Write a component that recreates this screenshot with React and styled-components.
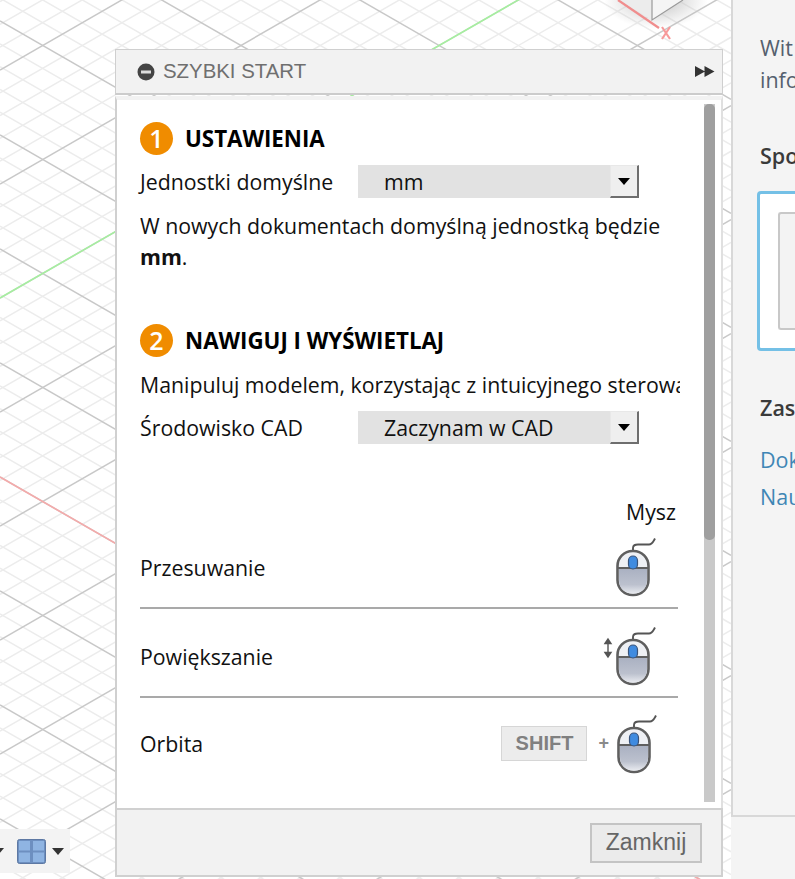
import React from "react";
import styled, { createGlobalStyle } from "styled-components";

const GlobalStyle = createGlobalStyle`
  html, body {
    margin: 0;
    padding: 0;
    height: 100%;
    overflow: hidden;
  }
  body {
    font-family: "Open Sans", "Liberation Sans", sans-serif;
  }
`;

const Page = styled.div`
  display: flex;
  width: 795px;
  height: 879px;
  overflow: hidden;
`;

const Canvas = styled.div`
  position: relative;
  width: 731px;
  height: 879px;
  background: #ffffff;
  overflow: hidden;
`;

const GridSvg = styled.svg`
  position: absolute;
  left: 0;
  top: 0;
`;

const ViewToolbar = styled.div`
  position: absolute;
  left: 0;
  top: 829px;
  width: 70px;
  height: 44px;
  display: flex;
  align-items: center;
  gap: 13px;
  background: #f3f3f3;
`;

const Caret = styled.span`
  border-left: 6px solid transparent;
  border-right: 6px solid transparent;
  border-top: 7px solid #333;
  margin-left: ${(p) => p.$left || 0}px;
`;

const Dialog = styled.div`
  position: absolute;
  left: 115px;
  top: 49px;
  width: 608px;
  height: 828px;
  display: flex;
  flex-direction: column;
`;

const DialogHeader = styled.div`
  height: 46px;
  flex: none;
  display: flex;
  align-items: center;
  box-sizing: border-box;
  padding: 0 7px 0 21px;
  margin-bottom: 1px;
  background: #f2f2f2;
  border: 1px solid #cfcfcf;
  border-bottom: 2px solid #cccccc;
  color: #6f6f6f;
  font-family: "Liberation Sans", Arial, sans-serif;
  font-size: 20.4px;
`;

const HeaderTitle = styled.span`
  margin-left: 8px;
  flex: 1;
`;

const DialogBody = styled.div`
  flex: 1;
  min-height: 0;
  position: relative;
  background: #ffffff;
  border-left: 2px solid #d0d0d0;
  border-right: 2px solid #e0e0e0;
  border-top: 4px solid #f2f2f2;
  overflow: hidden;
`;

const Content = styled.div`
  width: 540px;
  padding: 21px 0 0 23px;
  color: #111;
  font-size: 21.3px;
`;

const Section = styled.section`
  margin-bottom: ${(p) => p.$gap || 0}px;
`;

const Heading = styled.div`
  display: flex;
  align-items: center;
  gap: 12px;
  height: 34px;
  font-weight: 700;
  font-size: 22.3px;
  color: #000;
`;

const Badge = styled.span`
  width: 33px;
  height: 33px;
  border-radius: 50%;
  background: #f08c00;
  color: #fff;
  display: flex;
  align-items: center;
  justify-content: center;
  font-size: 25px;
  font-weight: 600;
`;

const FieldRow = styled.div`
  display: flex;
  align-items: center;
  height: 33px;
  margin-top: ${(p) => p.$top || 0}px;
  white-space: nowrap;
`;

const FieldLabel = styled.span`
  width: 218px;
  flex: none;
`;

const Select = styled.div`
  width: 281px;
  height: 33px;
  display: flex;
  align-items: center;
  justify-content: space-between;
  background: #e2e2e2;
  padding-left: 26px;
  box-sizing: border-box;
`;

const SelectArrow = styled.span`
  width: 29px;
  height: 33px;
  box-sizing: border-box;
  background: #efefef;
  border: 1px solid #e8e8e8;
  border-right: 2px solid #6e6e6e;
  border-bottom: 2px solid #6e6e6e;
  display: flex;
  align-items: center;
  justify-content: center;

  &::after {
    content: "";
    border-left: 6px solid transparent;
    border-right: 6px solid transparent;
    border-top: 7px solid #000;
  }
`;

const Paragraph = styled.p`
  margin: 12px 0 0;
  line-height: 31px;
  white-space: ${(p) => (p.$clip ? "nowrap" : "normal")};
  overflow: hidden;
`;

const MouseTable = styled.div`
  margin-top: 53px;
  width: 538px;
`;

const MouseHeader = styled.div`
  height: 23px;
  text-align: right;
  padding-right: 2px;
  line-height: 30px;
`;

const MouseRow = styled.div`
  display: flex;
  align-items: center;
  justify-content: space-between;
  height: 89px;
  box-sizing: border-box;
  padding: ${(p) => (p.$last ? "2px 19px 0 0" : "7px 20px 0 0")};
  border-bottom: ${(p) => (p.$last ? "none" : "2px solid #a9a9a9")};
`;

const Controls = styled.div`
  display: flex;
  align-items: center;
`;

const ArrowSlot = styled.span`
  display: flex;
  margin: 0 2px 16px 0;
`;

const ShiftKey = styled.span`
  display: inline-flex;
  align-items: center;
  justify-content: center;
  width: 86px;
  height: 35px;
  box-sizing: border-box;
  background: #ececec;
  border: 1px solid #d6d6d6;
  color: #808080;
  font-family: "Liberation Sans", Arial, sans-serif;
  font-weight: 700;
  font-size: 20px;
`;

const Plus = styled.span`
  margin: 0 8px 0 11px;
  color: #8a8a8a;
  font-family: "Liberation Sans", Arial, sans-serif;
  font-weight: 700;
  font-size: 18px;
`;

const ScrollTrack = styled.div`
  position: absolute;
  top: 4px;
  right: 6px;
  width: 11px;
  height: 698px;
  background: #c9c9c9;
`;

const ScrollThumb = styled.div`
  height: 436px;
  background: #9f9f9f;
  border-radius: 5px;
`;

const DialogFooter = styled.div`
  height: 69px;
  flex: none;
  display: flex;
  align-items: center;
  justify-content: flex-end;
  padding-right: 19px;
  background: #f2f2f2;
  border: 2px solid #d0d0d0;
  box-sizing: border-box;
`;

const CloseButton = styled.button`
  width: 112px;
  height: 40px;
  background: #ebebeb;
  border: 2px solid #c4c4c4;
  color: #666;
  font-family: "Liberation Sans", Arial, sans-serif;
  font-size: 23px;
  padding: 0;
`;

const SideWrap = styled.div`
  flex: 1;
  background: #f4f4f4;
  min-width: 0;
`;

const Side = styled.aside`
  height: 817px;
  box-sizing: border-box;
  background: #f4f4f4;
  border-left: 2px solid #d8d8d8;
  border-bottom: 2px solid #d8d8d8;
  padding: 32px 0 0 27px;
  overflow: hidden;
  white-space: nowrap;
  font-size: 21.5px;
  color: #55606e;
  line-height: 32px;
`;

const SideHeading = styled.div`
  font-weight: 600;
  color: #3a3a3a;
  margin-top: ${(p) => p.$top}px;
`;

const CardOutline = styled.div`
  width: 80px;
  height: 160px;
  box-sizing: border-box;
  margin-top: 19px;
  margin-left: -3px;
  padding: 18px 0 0 18px;
  border: 3px solid #74c0e6;
  border-right: none;
  border-radius: 4px 0 0 4px;
  background: #fff;
`;

const CardInner = styled.div`
  height: 118px;
  box-sizing: border-box;
  border: 2px solid #c8c8c8;
  border-right: none;
  border-radius: 3px 0 0 3px;
  background: #f3f3f3;
`;

const SideLinks = styled.div`
  margin-top: 17px;
  color: #3f86b5;
  line-height: 37px;
`;

const slope = 0.575;
const W = 731;
const H = 879;
const SUB = 114 / 5;

function gridLines() {
  const out = [];
  for (let k = -45; k <= 70; k++) {
    const major = k % 5 === 0;
    const stroke = major ? "#c8c8c8" : "#ececec";
    const up = 298 + k * SUB;
    const down = 477 - k * SUB;
    out.push({ key: "u" + k, y1: up, y2: up - W * slope, stroke, major });
    out.push({ key: "d" + k, y1: down, y2: down + W * slope, stroke, major });
  }
  return out.sort((a, b) => a.major - b.major);
}

function Grid() {
  return (
    <GridSvg width={W} height={H}>
      <defs>
        <radialGradient id="cubeShadow" cx="50%" cy="40%" r="50%">
          <stop offset="0%" stopColor="#b5b5b5" stopOpacity="0.85" />
          <stop offset="100%" stopColor="#bdbdbd" stopOpacity="0" />
        </radialGradient>
      </defs>
      {gridLines().map((l) => (
        <line key={l.key} x1="0" y1={l.y1} x2={W} y2={l.y2} stroke={l.stroke} strokeWidth="1.5" />
      ))}
      <line x1="0" y1="298" x2={W} y2={298 - W * slope} stroke="#a6eea0" strokeWidth="1.6" />
      <line x1="0" y1="477" x2={W} y2={477 + W * slope} stroke="#f4aaaa" strokeWidth="1.6" />
      <ellipse cx="656" cy="6" rx="52" ry="28" fill="url(#cubeShadow)" />
      <path d="M618 0L652 20V0Z" fill="#ececec" />
      <path d="M652 0V20L683 0Z" fill="#f5f5f5" />
      <path d="M652 0V20L683 0" fill="none" stroke="#9a9a9a" strokeWidth="1.2" />
      <line x1="618" y1="0" x2="659" y2="28" stroke="#f08d8d" strokeWidth="2.2" />
      <path d="M662 27L670 39M670 27L662 39" stroke="#f79a9a" strokeWidth="2.2" fill="none" />
    </GridSvg>
  );
}

function MouseIcon() {
  return (
    <svg width="42" height="60" viewBox="0 0 42 60">
      <defs>
        <linearGradient id="mouseBody" x1="0" y1="0" x2="0" y2="1">
          <stop offset="0%" stopColor="#a9b0c1" />
          <stop offset="65%" stopColor="#bcc1ce" />
          <stop offset="100%" stopColor="#e8eaef" />
        </linearGradient>
      </defs>
      <path d="M17 19V11C17 8 19 7.500 22 7.500H33C36 7.500 37 5 39 1.500" fill="none" stroke="#555" strokeWidth="1.9" />
      <rect x="1.500" y="14" width="31" height="44" rx="15" fill="#eef0f4" stroke="#5f5f5f" strokeWidth="2.6" />
      <path d="M3 31H31V43C31 52 25 56.500 17 56.500C9 56.500 3 52 3 43Z" fill="url(#mouseBody)" />
      <line x1="2" y1="31" x2="32" y2="31" stroke="#5f5f5f" strokeWidth="2" />
      <rect x="12.500" y="19" width="9" height="13" rx="4.500" fill="#3f8be0" stroke="#39537a" strokeWidth="1.2" />
    </svg>
  );
}

function ZoomArrow() {
  return (
    <svg width="12" height="22" viewBox="0 0 12 22">
      <path d="M6 3V19M3 6.500L6 2L9 6.500ZM3 15.500L6 20L9 15.500Z" fill="#555" stroke="#555" strokeWidth="1.4" />
    </svg>
  );
}

function CollapseIcon() {
  return (
    <svg width="18" height="18" viewBox="0 0 18 18">
      <circle cx="9" cy="9" r="8.500" fill="#444" />
      <rect x="4" y="7.500" width="10" height="3" fill="#ddd" />
    </svg>
  );
}

function ForwardIcon() {
  return (
    <svg width="20" height="11" viewBox="0 0 20 11">
      <path d="M0 0L10 5.500L0 11ZM9.500 0L19.500 5.500L9.500 11Z" fill="#333" />
    </svg>
  );
}

function LayoutIcon() {
  return (
    <svg width="29" height="25" viewBox="0 0 29 25">
      <rect x="0.500" y="0.500" width="28" height="24" rx="2" fill="#6d8fc0" stroke="#5d78a3" />
      <rect x="2" y="2" width="11" height="9.500" fill="#8fb4e2" />
      <rect x="16" y="2" width="11" height="9.500" fill="#8fb4e2" />
      <rect x="2" y="13.500" width="11" height="9.500" fill="#8fb4e2" />
      <rect x="16" y="13.500" width="11" height="9.500" fill="#8fb4e2" />
    </svg>
  );
}

export default function App() {
  return (
    <Page>
      <GlobalStyle />
      <Canvas>
        <Grid />
        <ViewToolbar>
          <Caret $left={-8} />
          <LayoutIcon />
          <Caret $left={-7} />
        </ViewToolbar>
        <Dialog>
          <DialogHeader>
            <CollapseIcon />
            <HeaderTitle>SZYBKI START</HeaderTitle>
            <ForwardIcon />
          </DialogHeader>
          <DialogBody>
            <Content>
              <Section $gap={51}>
                <Heading>
                  <Badge>1</Badge>
                  USTAWIENIA
                </Heading>
                <FieldRow $top={10}>
                  <FieldLabel>Jednostki domyślne</FieldLabel>
                  <Select>
                    mm
                    <SelectArrow />
                  </Select>
                </FieldRow>
                <Paragraph>
                  W nowych dokumentach domyślną jednostką będzie <b>mm</b>.
                </Paragraph>
              </Section>
              <Section>
                <Heading>
                  <Badge>2</Badge>
                  NAWIGUJ I WYŚWIETLAJ
                </Heading>
                <Paragraph $clip>Manipuluj modelem, korzystając z intuicyjnego sterowania</Paragraph>
                <FieldRow $top={11}>
                  <FieldLabel>Środowisko CAD</FieldLabel>
                  <Select>
                    Zaczynam w CAD
                    <SelectArrow />
                  </Select>
                </FieldRow>
                <MouseTable>
                  <MouseHeader>Mysz</MouseHeader>
                  <MouseRow>
                    Przesuwanie
                    <Controls>
                      <MouseIcon />
                    </Controls>
                  </MouseRow>
                  <MouseRow>
                    Powiększanie
                    <Controls>
                      <ArrowSlot>
                        <ZoomArrow />
                      </ArrowSlot>
                      <MouseIcon />
                    </Controls>
                  </MouseRow>
                  <MouseRow $last>
                    Orbita
                    <Controls>
                      <ShiftKey>SHIFT</ShiftKey>
                      <Plus>+</Plus>
                      <MouseIcon />
                    </Controls>
                  </MouseRow>
                </MouseTable>
              </Section>
            </Content>
            <ScrollTrack>
              <ScrollThumb />
            </ScrollTrack>
          </DialogBody>
          <DialogFooter>
            <CloseButton>Zamknij</CloseButton>
          </DialogFooter>
        </Dialog>
      </Canvas>
      <SideWrap>
        <Side>
          <div>Wit</div>
          <div>info</div>
          <SideHeading $top={44}>Spo</SideHeading>
          <CardOutline>
            <CardInner />
          </CardOutline>
          <SideHeading $top={41}>Zas</SideHeading>
          <SideLinks>
            <div>Dok</div>
            <div>Nau</div>
          </SideLinks>
        </Side>
      </SideWrap>
    </Page>
  );
}
